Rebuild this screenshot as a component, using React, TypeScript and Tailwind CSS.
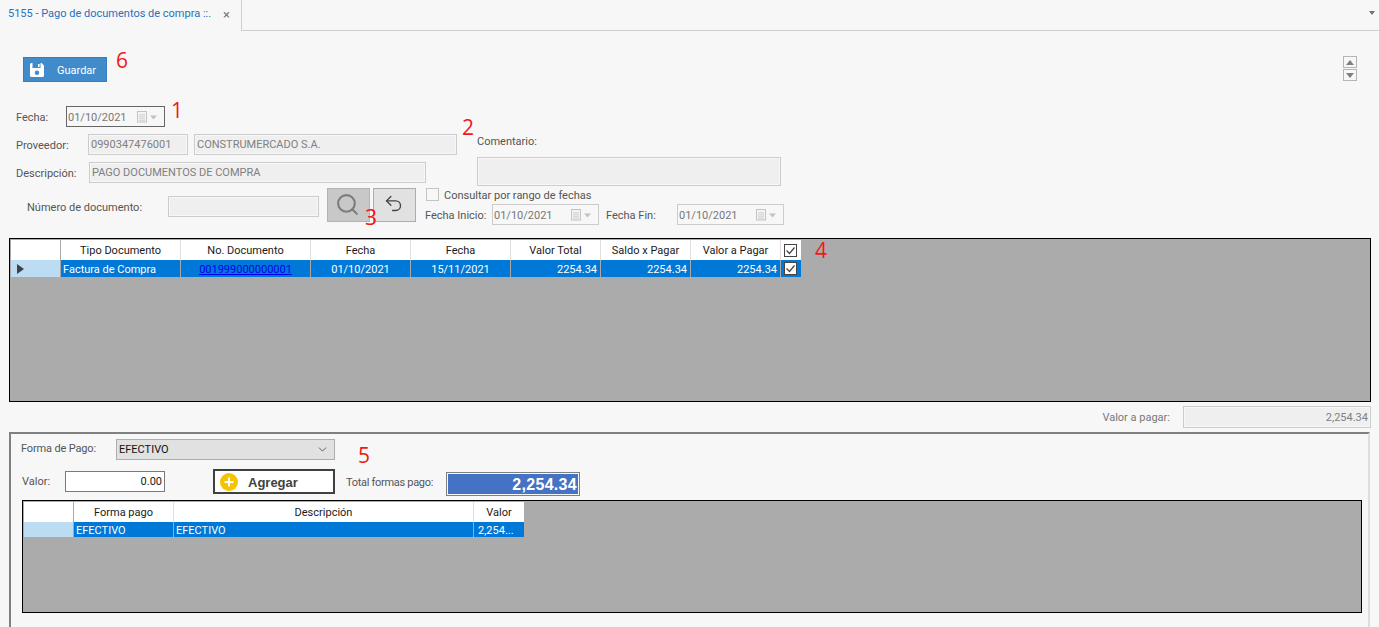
import React from "react";
import { ChevronDown, Search, Undo2 } from "lucide-react";

const Num = ({ n, className }: { n: string; className: string }) => (
  <span className={`absolute text-[21px] leading-none text-[#f01818] font-['Open_Sans',sans-serif] ${className}`}>{n}</span>
);

const Label = ({ children, className = "" }: { children: React.ReactNode; className?: string }) => (
  <span className={`shrink-0 translate-y-[1px] text-[11px] leading-[14px] text-[#555555] whitespace-nowrap ${className}`}>{children}</span>
);

const Field = ({ value = "", className = "", right = false }: { value?: string; className?: string; right?: boolean }) => (
  <div
    className={`shrink-0 h-[21px] flex items-center px-[2px] pt-[2px] border border-[#cccccc] bg-[#efefef] shadow-[inset_0_0_0_1px_#f7f7f7] text-[11px] text-[#808080] whitespace-nowrap ${right ? "justify-end" : ""} ${className}`}
  >
    {value}
  </div>
);

const CalendarGlyph = () => (
  <svg width="22" height="12" viewBox="0 0 22 12" className="shrink-0 -mt-[3px]">
    <rect x="0.5" y="0.5" width="9" height="10.5" fill="#f4f4f4" stroke="#c4c4c4" />
    <path d="M2 3.5h6M2 5.5h6M2 7.5h6M2 9.5h6M3 3v7M5 3v7M7 3v7" stroke="#d6d6d6" strokeWidth="0.8" />
    <path d="M13 4.5h7l-3.5 4z" fill="#c2c2c2" />
  </svg>
);

const DateBox = ({ className = "", dark = false }: { className?: string; dark?: boolean }) => (
  <div
    className={`shrink-0 h-[21px] flex items-center justify-between pl-[1px] pr-[5px] pt-[3px] border bg-[#f7f7f7] text-[11px] text-[#777777] ${dark ? "border-[#666666]" : "border-[#cccccc]"} ${className}`}
  >
    <span>01/10/2021</span>
    <CalendarGlyph />
  </div>
);

const Check = ({ className = "" }: { className?: string }) => (
  <svg width="13" height="13" viewBox="0 0 13 13" className={className}>
    <rect x="0.5" y="0.5" width="12" height="12" fill="#ffffff" stroke="#444444" />
    <path d="M2.5 6.5l3 3 5-6" fill="none" stroke="#444444" strokeWidth="1.2" />
  </svg>
);

const HCell = ({ children, className = "" }: { children?: React.ReactNode; className?: string }) => (
  <div className={`shrink-0 h-full flex items-center justify-center pt-[2px] border-r border-[#e0e0e0] text-[11px] text-[#1a1a1a] whitespace-nowrap ${className}`}>
    {children}
  </div>
);

const DCell = ({ children, className = "" }: { children?: React.ReactNode; className?: string }) => (
  <div className={`shrink-0 h-full flex items-center pt-[3px] border-r border-[#a9a9a9] text-[11px] text-white whitespace-nowrap overflow-hidden ${className}`}>
    {children}
  </div>
);

export default function App() {
  return (
    <div className="relative w-[1379px] h-[627px] overflow-hidden bg-[#f7f7f7] font-['Roboto',sans-serif]">
      {/* tab strip */}
      <div className="h-[31px] flex border-b border-[#d0d0d0]">
        <div className="relative z-10 w-[242px] h-[31px] flex items-center pl-[8px] pb-[3px] border-r border-[#d0d0d0] bg-[#f7f7f7]">
          <span className="text-[11px] text-[#2472c0] whitespace-nowrap">5155 - Pago de documentos de compra ::.</span>
          <span className="absolute left-[223px] top-[7px] text-[13px] leading-[16px] text-[#777777]">×</span>
        </div>
        <div className="flex-1 flex justify-end pr-[2px] pt-[11px]">
          <svg width="9" height="5" viewBox="0 0 9 5"><path d="M1 0h6L4 4z" fill="#707070" /></svg>
        </div>
      </div>

      {/* toolbar */}
      <div className="relative mt-[26px] h-[25px] flex justify-between pl-[23px] pr-[22px]">
        <button className="w-[84px] h-[25px] flex items-center pl-[5px] bg-[#428bca] border border-[#357ebd] text-[11px] text-white">
          <svg width="16" height="16" viewBox="0 0 16 16" className="shrink-0">
            <path d="M1 2.5A1.5 1.5 0 0 1 2.5 1h10L15 3.5v10a1.5 1.5 0 0 1-1.5 1.5h-11A1.5 1.5 0 0 1 1 13.5z" fill="#ffffff" />
            <rect x="3.5" y="1" width="8" height="5" fill="#428bca" />
            <rect x="9" y="2" width="1.6" height="3" fill="#ffffff" />
            <circle cx="8" cy="10.8" r="2.2" fill="#428bca" />
          </svg>
          <span className="ml-[12px] translate-y-[2px]">Guardar</span>
        </button>
        <div className="flex flex-col gap-[1px] -mt-[1px]">
          <div className="w-[14px] h-[12px] flex items-center justify-center border border-[#b5b5b5] bg-[#f7f7f7]">
            <svg width="8" height="5" viewBox="0 0 8 5"><path d="M4 0l4 5H0z" fill="#808080" /></svg>
          </div>
          <div className="w-[14px] h-[12px] flex items-center justify-center border border-[#b5b5b5] bg-[#f7f7f7]">
            <svg width="8" height="5" viewBox="0 0 8 5"><path d="M0 0h8L4 5z" fill="#808080" /></svg>
          </div>
        </div>
        <Num n="6" className="left-[116px] -top-[7px]" />
      </div>

      {/* form upper */}
      <div className="relative mt-[24px] h-[80px] flex pl-[16px]">
        <div className="w-[461px] shrink-0 flex flex-col gap-[7px]">
          <div className="flex items-center">
            <Label className="w-[50px]">Fecha:</Label>
            <DateBox dark className="w-[99px]" />
          </div>
          <div className="flex items-center">
            <Label className="w-[72px]">Proveedor:</Label>
            <Field value="0990347476001" className="w-[100px]" />
            <Field value="CONSTRUMERCADO S.A." className="ml-[6px] w-[263px]" />
          </div>
          <div className="flex items-center">
            <Label className="w-[73px]">Descripción:</Label>
            <Field value="PAGO DOCUMENTOS DE COMPRA" className="w-[337px]" />
          </div>
        </div>
        <div className="w-[304px] shrink-0 pt-[28px]">
          <Label className="block">Comentario:</Label>
          <Field className="mt-[9px] w-[304px] !h-[29px]" />
        </div>
        <Num n="1" className="left-[171px] -top-[6px]" />
        <Num n="2" className="left-[462px] top-[11px]" />
      </div>

      {/* form lower */}
      <div className="relative mt-[2px] h-[38px] flex items-start pl-[27px]">
        <Label className="w-[141px] mt-[12px]">Número de documento:</Label>
        <Field className="w-[151px] mt-[8px]" />
        <button className="ml-[8px] w-[43px] h-[34px] shrink-0 flex items-center justify-center bg-[#c8c8c8] border border-[#b4b4b4]">
          <Search size={25} strokeWidth={2} className="text-[#7c7c7c] -ml-[2px] -mt-[2px]" />
        </button>
        <button className="ml-[3px] w-[43px] h-[34px] shrink-0 flex items-center justify-center bg-[#e1e1e1] border border-[#adadad]">
          <Undo2 size={21} strokeWidth={1.6} className="text-[#444444] -ml-[3px] -mt-[3px]" />
        </button>
        <div className="ml-[9px] flex flex-col">
          <div className="h-[13px] flex items-center pl-[1px]">
            <div className="w-[13px] h-[13px] border border-[#c4c4c4] bg-[#f7f7f7]" />
            <Label className="ml-[5px]">Consultar por rango de fechas</Label>
          </div>
          <div className="mt-[3px] flex items-center">
            <Label className="w-[67px]">Fecha Inicio:</Label>
            <DateBox className="w-[107px]" />
            <Label className="ml-[7px] w-[71px]">Fecha Fin:</Label>
            <DateBox className="w-[107px]" />
          </div>
        </div>
        <Num n="3" className="left-[365px] top-[19px]" />
      </div>

      {/* grid 1 */}
      <div className="relative mt-[12px] ml-[9px] w-[1362px] h-[164px] border border-black bg-[#ababab] p-[1px]">
        <div className="h-[20px] w-[790px] flex bg-white">
          <HCell className="w-[50px] !border-[#a9a9a9]" />
          <HCell className="w-[120px]">Tipo Documento</HCell>
          <HCell className="w-[130px]">No. Documento</HCell>
          <HCell className="w-[100px]">Fecha</HCell>
          <HCell className="w-[100px]">Fecha</HCell>
          <HCell className="w-[90px]">Valor Total</HCell>
          <HCell className="w-[90px]">Saldo x Pagar</HCell>
          <HCell className="w-[90px]">Valor a Pagar</HCell>
          <HCell className="w-[20px] !border-r-0 !justify-start pl-[3px] !pt-0"><Check /></HCell>
        </div>
        <div className="h-[17px] w-[790px] flex bg-[#0078d7]">
          <DCell className="w-[50px] bg-[#bcdcf4] pl-[6px]">
            <svg width="7" height="10" viewBox="0 0 7 10" className="-mt-[3px]"><path d="M0 0l7 5-7 5z" fill="#404040" /></svg>
          </DCell>
          <DCell className="w-[120px] pl-[2px]">Factura de Compra</DCell>
          <DCell className="w-[130px] justify-center"><span className="text-[#0000ee] underline">001999000000001</span></DCell>
          <DCell className="w-[100px] justify-center">01/10/2021</DCell>
          <DCell className="w-[100px] justify-center">15/11/2021</DCell>
          <DCell className="w-[90px] justify-end pr-[3px]">2254.34</DCell>
          <DCell className="w-[90px] justify-end pr-[3px]">2254.34</DCell>
          <DCell className="w-[90px] justify-end pr-[3px]">2254.34</DCell>
          <DCell className="w-[20px] !border-r-0 pl-[3px] !pt-0"><Check /></DCell>
        </div>
        <Num n="4" className="left-[805px] top-[1px]" />
      </div>

      {/* valor a pagar */}
      <div className="mt-[4px] h-[22px] flex items-center justify-end pr-[8px]">
        <Label className="text-[#777777]">Valor a pagar:</Label>
        <Field value="2,254.34" right className="ml-[13px] w-[188px] !h-[22px]" />
      </div>

      {/* panel */}
      <div className="relative mt-[4px] ml-[9px] w-[1361px] h-[200px] border-t-2 border-l-2 border-r-2 border-t-[#808080] border-l-[#808080] border-r-[#dddddd] pt-[5px] pl-[10px]">
        <div className="flex items-center h-[21px]">
          <Label className="w-[95px] -mt-[4px] tracking-[-0.15px]">Forma de Pago:</Label>
          <div className="w-[219px] h-[21px] flex items-center justify-between pl-[2px] pr-[5px] pt-[2px] bg-[#e1e1e1] border border-[#adadad] text-[11px] text-[#111111]">
            <span>EFECTIVO</span>
            <ChevronDown size={13} strokeWidth={1.5} className="text-[#444444] -mt-[2px]" />
          </div>
        </div>
        <div className="mt-[9px] h-[25px] flex items-start">
          <Label className="w-[43px] ml-[1px] mt-[5px]">Valor:</Label>
          <div className="w-[100px] h-[21px] mt-[2px] flex items-center justify-end pr-[2px] pt-[2px] bg-white border border-[#7a7a7a] text-[11px] text-[#222222]">0.00</div>
          <button className="ml-[48px] w-[122px] h-[25px] flex items-center pl-[5px] bg-white border-2 border-[#404040]">
            <svg width="18" height="18" viewBox="0 0 18 18" className="shrink-0">
              <circle cx="9" cy="9" r="9" fill="#f5c400" />
              <path d="M9 4.5v9M4.5 9h9" stroke="#ffffff" strokeWidth="2" />
            </svg>
            <span className="ml-[10px] translate-y-[1px] font-['Liberation_Sans',sans-serif] font-bold text-[13px] text-[#404040]">Agregar</span>
          </button>
          <Label className="ml-[11px] w-[100px] mt-[6px] tracking-[-0.3px]">Total formas pago:</Label>
          <div className="mt-[3px] w-[134px] h-[24px] flex items-center justify-end pr-[2px] pt-[2px] bg-[#4472c4] border border-[#808080] shadow-[inset_0_0_0_1px_#f7f7f7] font-['Liberation_Sans',sans-serif] font-bold text-[16px] tracking-[0.3px] text-white">2,254.34</div>
        </div>
        <div className="mt-[6px] ml-[1px] w-[1340px] h-[113px] border border-black bg-[#ababab] p-[1px]">
          <div className="h-[20px] w-[500px] flex bg-white">
            <HCell className="w-[50px] !border-[#a9a9a9]" />
            <HCell className="w-[100px]">Forma pago</HCell>
            <HCell className="w-[300px]">Descripción</HCell>
            <HCell className="w-[50px] !border-r-0">Valor</HCell>
          </div>
          <div className="h-[15px] w-[500px] flex bg-[#0078d7]">
            <DCell className="w-[50px] bg-[#bcdcf4]" />
            <DCell className="w-[100px] pl-[2px]">EFECTIVO</DCell>
            <DCell className="w-[300px] pl-[2px]">EFECTIVO</DCell>
            <DCell className="w-[50px] pl-[4px] !border-r-0">2,254...</DCell>
          </div>
        </div>
        <Num n="5" className="left-[347px] top-[11px]" />
      </div>
    </div>
  );
}
